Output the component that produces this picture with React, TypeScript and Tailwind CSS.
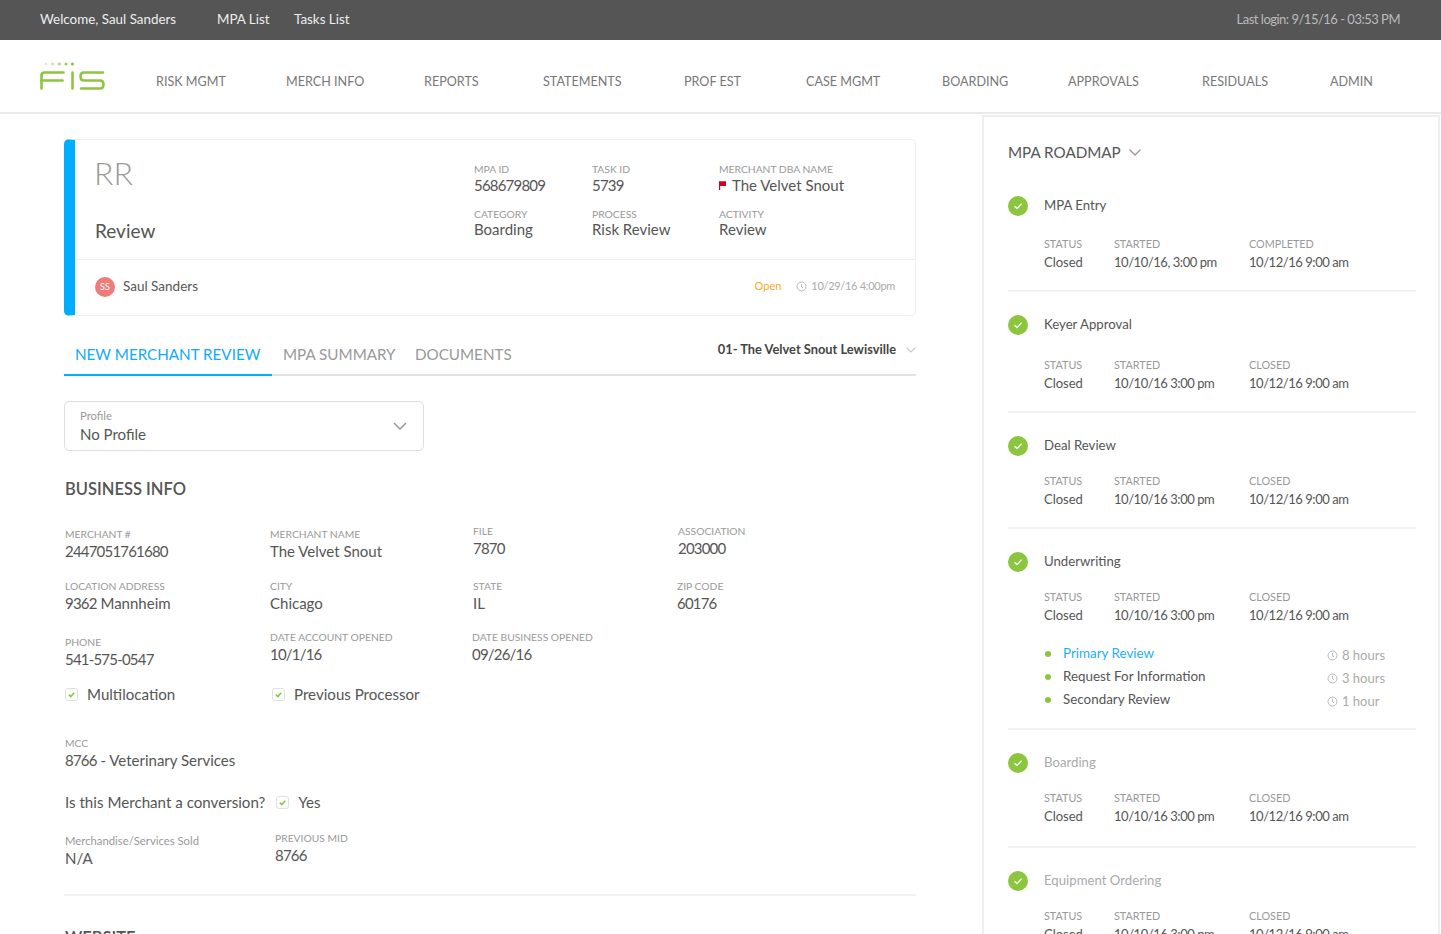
import React from "react";

const font = { fontFamily: '"Lato", "Open Sans", sans-serif' };

function N({ children }: { children: React.ReactNode }) {
  return <span className="tracking-[-0.8px]">{children}</span>;
}
function D({ children }: { children: React.ReactNode }) {
  return <span className="tracking-[-0.45px]">{children}</span>;
}

function Clock({ className = "" }: { className?: string }) {
  return (
    <svg viewBox="0 0 12 12" className={className} fill="none" stroke="#aaaaaa" strokeWidth="0.9">
      <circle cx="6" cy="6" r="4.9" />
      <path d="M6 3v3.200l1.800 1.600" />
    </svg>
  );
}

function Check() {
  return (
    <span className="-mt-[1px] flex h-[20px] w-[20px] items-center justify-center rounded-full bg-[#8cc63f]">
      <svg viewBox="0 0 10 10" className="h-[10px] w-[10px]" fill="none" stroke="#fff" strokeWidth="1.3">
        <path d="M1.500 5.300 4 7.600 8.600 2.600" />
      </svg>
    </span>
  );
}

function Box({ label, cls = "" }: { label: string; cls?: string }) {
  return (
    <div className={`flex items-center gap-[9px] ${cls}`}>
      <span className="flex h-[13px] w-[13px] items-center justify-center rounded-[3px] border border-[#e0e0e0] bg-white">
        <svg viewBox="0 0 10 10" className="h-[9px] w-[9px]" fill="none" stroke="#8cc63f" strokeWidth="1.8">
          <path d="M2 5.200 4.200 7.200 8 3" />
        </svg>
      </span>
      <span className="text-[15.100px] leading-[20px] text-[#555555]">{label}</span>
    </div>
  );
}

function Field({ l, v, cls = "", small = false }: { l: string; v: React.ReactNode; cls?: string; small?: boolean }) {
  return (
    <div className={cls}>
      <div className={`${small ? "text-[11.300px]" : "text-[10.300px]"} leading-[14px] text-[#999999]`}>{l}</div>
      <div className="text-[15px] leading-[20px] text-[#555555]">{v}</div>
    </div>
  );
}

function CardField({ l, v, cls = "", tight = false }: { l: string; v: React.ReactNode; cls?: string; tight?: boolean }) {
  return (
    <div className={cls}>
      <div className="text-[10.300px] leading-[13px] text-[#999999]">{l}</div>
      <div className={`${tight ? "-mt-[2px]" : "-mt-[1px]"} text-[15px] leading-[20px] text-[#555555]`}>{v}</div>
    </div>
  );
}

const nav: [string, string][] = [
  ["RISK MGMT", "w-[130px]"],
  ["MERCH INFO", "w-[138px]"],
  ["REPORTS", "w-[119px]"],
  ["STATEMENTS", "w-[141px]"],
  ["PROF EST", "w-[122px]"],
  ["CASE MGMT", "w-[136px]"],
  ["BOARDING", "w-[126px]"],
  ["APPROVALS", "w-[134px]"],
  ["RESIDUALS", "w-[128px]"],
  ["ADMIN", "w-[60px]"],
];

function Step({
  title,
  closedLabel = "CLOSED",
  started = "10/10/16 3:00 pm",
  closed = "10/12/16 9:00 am",
  muted = false,
  cls = "",
  top = "",
  children,
  line = true,
}: {
  title: string;
  closedLabel?: string;
  started?: string;
  closed?: string;
  muted?: boolean;
  cls?: string;
  top?: string;
  children?: React.ReactNode;
  line?: boolean;
}) {
  const lab = "text-[10.800px] leading-[14px] text-[#999999]";
  const val = "mt-[2px] text-[13px] leading-[18px] text-[#555555]";
  return (
    <div className={`${line ? "border-b-2 border-[#f2f2f2]" : ""} ${cls}`}>
      <div className="flex h-[20px] items-center">
        <Check />
        <span className={`ml-[16px] text-[13.200px] ${muted ? "text-[#aaaaaa]" : "text-[#555555]"}`}>{title}</span>
      </div>
      <div className={`ml-[36px] flex ${top}`}>
        <div className="w-[70px]">
          <div className={lab}>STATUS</div>
          <div className={val}>Closed</div>
        </div>
        <div className="w-[135px]">
          <div className={lab}>STARTED</div>
          <div className={val}><D>{started}</D></div>
        </div>
        <div>
          <div className={lab}>{closedLabel}</div>
          <div className={val}><D>{closed}</D></div>
        </div>
      </div>
      {children}
    </div>
  );
}

function Sub({ t, h, blue = false }: { t: string; h: string; blue?: boolean }) {
  return (
    <div className="flex h-[23px] items-center">
      <span className="ml-[37px] h-[6px] w-[6px] rounded-full bg-[#8cc63f]" />
      <span className={`ml-[12px] w-[264px] text-[13.400px] ${blue ? "text-[#1eaeff]" : "text-[#555555]"}`}>{t}</span>
      <Clock className="mt-[4px] h-[11px] w-[11px]" />
      <span className="ml-[4px] mt-[4px] text-[13px] text-[#aaaaaa]">{h}</span>
    </div>
  );
}

export default function App() {
  return (
    <div className="h-[934px] w-full overflow-hidden bg-white" style={font}>
      <header className="flex h-[40px] items-center bg-[#555555] pb-[1px] pl-[40px] pr-[41px] text-[13.400px] text-[#eeeeee]">
        <span className="w-[177px]">Welcome, Saul Sanders</span>
        <span className="w-[77px]">MPA List</span>
        <span>Tasks List</span>
        <span className="ml-auto text-[13px] tracking-[-0.5px] text-[#bbbbbb]">Last login: 9/15/16 - 03:53 PM</span>
      </header>

      <nav className="flex h-[74px] items-center border-b-2 border-[#eaeaea] pl-[40px]">
        <svg viewBox="0 0 65 28" className="h-[28px] w-[65px] shrink-0" fill="none" stroke="#8cc63f" strokeWidth="2.600" strokeLinecap="round" strokeLinejoin="round">
          <circle cx="6" cy="2" r="1.400" fill="#dfeecb" stroke="none" />
          <circle cx="12.700" cy="2" r="1.400" fill="#c9e3a5" stroke="none" />
          <circle cx="19.300" cy="2" r="1.600" fill="#b4d880" stroke="none" />
          <circle cx="26" cy="2" r="1.600" fill="#a0cf5f" stroke="none" />
          <circle cx="32.500" cy="2" r="1.600" fill="#8cc63f" stroke="none" />
          <path d="M1.500 26.500V13.500q0-3 3-3H23.500" />
          <path d="M1.500 18.500H22.500" />
          <path d="M32.500 10.500V26.500" />
          <path d="M63 10.500H44q-3.500 0-3.500 4t3.500 4H60q3.500 0 3.500 4t-3.500 4H41" />
        </svg>
        <div className="ml-[51px] mt-[12px] flex text-[12.600px] text-[#777777]">
          {nav.map(([t, w]) => (
            <span key={t} className={w}>{t}</span>
          ))}
        </div>
      </nav>

      <main className="flex">
        <section className="w-[982px] shrink-0 pl-[64px] pr-[66px] pt-[25px]">
          <div className="h-[177px] rounded-[5px] border border-l-[11px] border-[#eeeeee] border-l-[#00aeff]">
            <div className="flex h-[120px] border-b border-[#eeeeee]">
              <div className="w-[399px] pl-[20px]">
                <div className="-ml-[1px] mt-[15px] text-[32px] font-light leading-[36px] text-[#999999]">RR</div>
                <div className="mt-[27px] text-[19px] leading-[26px] text-[#555555]">Review</div>
              </div>
              <div className="pt-[23px]">
                <div className="flex">
                  <CardField cls="w-[118px]" l="MPA ID" v={<N>568679809</N>} />
                  <CardField cls="w-[127px]" l="TASK ID" v={<N>5739</N>} />
                  <CardField
                    l="MERCHANT DBA NAME"
                    v={
                      <span className="flex items-center gap-[6px]">
                        <svg viewBox="0 0 8 10" className="h-[9px] w-[7px]"><path d="M0 0h8v5.500H1.400V10H0z" fill="#d0021b" /></svg>
                        The Velvet Snout
                      </span>
                    }
                  />
                </div>
                <div className="mt-[13px] flex">
                  <CardField tight cls="w-[118px]" l="CATEGORY" v="Boarding" />
                  <CardField tight cls="w-[127px]" l="PROCESS" v="Risk Review" />
                  <CardField tight l="ACTIVITY" v="Review" />
                </div>
              </div>
            </div>
            <div className="flex h-[53px] items-center pl-[20px] pr-[20px]">
              <span className="flex h-[20px] w-[20px] items-center justify-center rounded-full bg-[#ef7b7b] text-[9px] text-white">SS</span>
              <span className="ml-[8px] text-[13.500px] text-[#555555]">Saul Sanders</span>
              <span className="ml-auto text-[11px] text-[#ffa726]">Open</span>
              <Clock className="ml-[15px] h-[11px] w-[11px]" />
              <span className="ml-[4px] text-[11px] tracking-[-0.3px] text-[#aaaaaa]">10/29/16 4:00pm</span>
            </div>
          </div>

          <div className="mt-[18px] flex h-[42px] whitespace-nowrap border-b-2 border-[#e2e2e2]">
            <div className="-mb-[2px] flex h-[42px] w-[208px] items-center border-b-2 border-[#00aeff] pl-[11px] text-[15.200px] text-[#12aaff]">NEW MERCHANT REVIEW</div>
            <div className="flex w-[132px] items-center pl-[11px] text-[15.200px] text-[#999999]">MPA SUMMARY</div>
            <div className="flex items-center pl-[11px] text-[15.200px] text-[#999999]">DOCUMENTS</div>
            <div className="ml-auto flex h-[32px] items-center text-[12.850px] font-bold text-[#444444]">
              01- The Velvet Snout Lewisville
              <svg viewBox="0 0 10 6" className="ml-[10px] h-[6px] w-[10px]" fill="none" stroke="#cccccc" strokeWidth="1.200"><path d="M.5.5 5 5 9.500.5" /></svg>
            </div>
          </div>

          <div className="mt-[25px] flex h-[50px] w-[360px] items-center justify-between rounded-[5px] border border-[#dedede] pl-[15px] pr-[16px]">
            <div>
              <div className="text-[11.300px] leading-[14px] text-[#999999]">Profile</div>
              <div className="mt-[1px] text-[15px] leading-[20px] text-[#555555]">No Profile</div>
            </div>
            <svg viewBox="0 0 14 8" className="h-[8px] w-[14px]" fill="none" stroke="#999999" strokeWidth="1.500"><path d="M1 1l6 6 6-6" /></svg>
          </div>

          <h2 className="ml-[1px] mt-[27px] text-[16.500px] font-semibold leading-[22px] text-[#555555]">BUSINESS INFO</h2>

          <div className="ml-[1px] mt-[24px] flex">
            <Field cls="w-[205px] pt-[3px]" l="MERCHANT #" v={<N>2447051761680</N>} />
            <Field cls="w-[203px] pt-[3px]" l="MERCHANT NAME" v="The Velvet Snout" />
            <Field cls="w-[205px]" l="FILE" v={<N>7870</N>} />
            <Field l="ASSOCIATION" v={<N>203000</N>} />
          </div>
          <div className="ml-[1px] mt-[18px] flex">
            <Field cls="w-[205px]" l="LOCATION ADDRESS" v={<><N>9362</N> Mannheim</>} />
            <Field cls="w-[203px]" l="CITY" v="Chicago" />
            <Field cls="w-[204px]" l="STATE" v="IL" />
            <Field l="ZIP CODE" v={<N>60176</N>} />
          </div>
          <div className="ml-[1px] mt-[22px] flex">
            <Field cls="w-[205px]" l="PHONE" v={<N>541-575-0547</N>} />
            <Field cls="w-[202px] -mt-[5px]" l="DATE ACCOUNT OPENED" v={<N>10/1/16</N>} />
            <Field cls="-mt-[5px]" l="DATE BUSINESS OPENED" v={<N>09/26/16</N>} />
          </div>
          <div className="ml-[1px] mt-[15px] flex">
            <Box cls="w-[207px]" label="Multilocation" />
            <Box label="Previous Processor" />
          </div>
          <Field cls="ml-[1px] mt-[32px]" l="MCC" v={<><N>8766</N> - Veterinary Services</>} />
          <div className="ml-[1px] mt-[22px] flex items-center">
            <span className="mr-[11px] text-[15.150px] leading-[20px] text-[#555555]">Is this Merchant a conversion?</span>
            <Box label="Yes" />
          </div>
          <div className="ml-[1px] mt-[19px] flex">
            <Field small cls="w-[210px] pt-[3px]" l="Merchandise/Services Sold" v="N/A" />
            <Field l="PREVIOUS MID" v={<N>8766</N>} />
          </div>
          <div className="mt-[26px] h-[2px] bg-[#f2f2f2]" />
          <h2 className="ml-[1px] mt-[31px] text-[16.500px] font-semibold leading-[22px] text-[#555555]">WEBSITE</h2>
        </section>

        <aside className="mr-px mt-[1px] flex-1 border-2 border-b-0 border-[#eeeeee] pl-[24px] pr-[22px] pt-[23px]">
          <div className="flex h-[24px] items-center text-[15.200px] text-[#555555]">
            MPA ROADMAP
            <svg viewBox="0 0 12 7" className="ml-[8px] h-[7px] w-[12px]" fill="none" stroke="#999999" strokeWidth="1.300"><path d="M.5.5l5.500 5.500 5.500-5.500" /></svg>
          </div>
          <Step cls="mt-[32px] h-[96px]" top="mt-[21px]" title="MPA Entry" closedLabel="COMPLETED" started="10/10/16, 3:00 pm" />
          <Step cls="mt-[23px] h-[98px]" top="mt-[23px]" title="Keyer Approval" />
          <Step cls="mt-[23px] h-[93px]" top="mt-[18px]" title="Deal Review" />
          <Step cls="mt-[23px] h-[178px]" top="mt-[18px]" title="Underwriting">
            <div className="mt-[18px]">
              <Sub blue t="Primary Review" h="8 hours" />
              <Sub t="Request For Information" h="3 hours" />
              <Sub t="Secondary Review" h="1 hour" />
            </div>
          </Step>
          <Step cls="mt-[23px] h-[95px]" top="mt-[18px]" muted title="Boarding" />
          <Step cls="mt-[23px]" top="mt-[18px]" muted line={false} title="Equipment Ordering" />
        </aside>
      </main>
    </div>
  );
}
